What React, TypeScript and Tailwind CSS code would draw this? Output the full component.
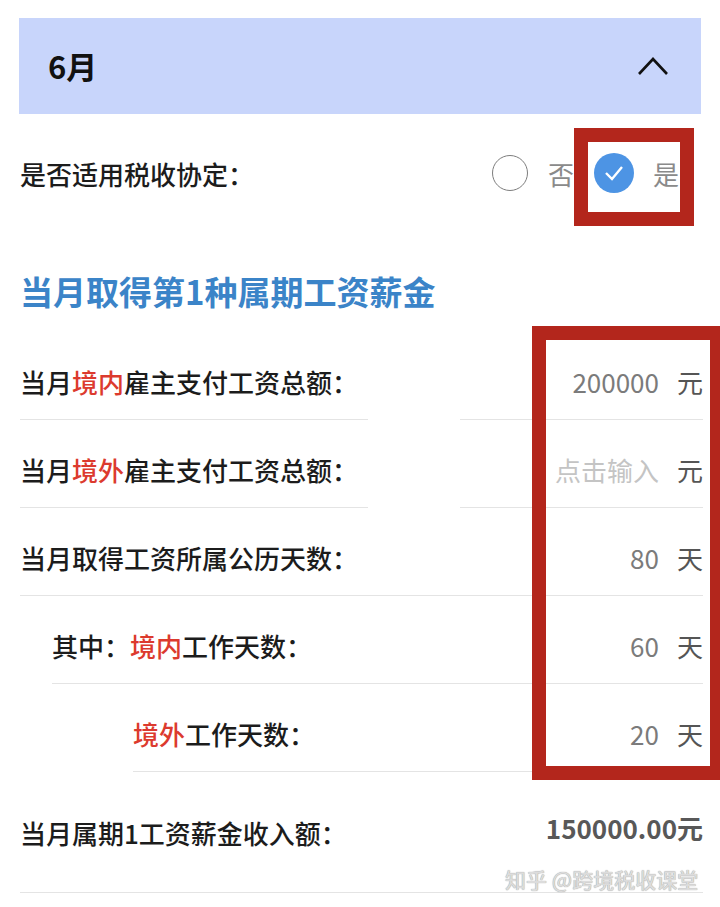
import React from "react";

const font = { fontFamily: '"Noto Sans CJK SC", "Noto Sans", sans-serif' };

type RowProps = {
  label: React.ReactNode;
  value: string;
  unit: string;
  placeholder?: boolean;
  split?: boolean;
  indent?: string;
};

const Red = ({ children }: { children: React.ReactNode }) => (
  <span className="text-[#dc3a2e]">{children}</span>
);

const Row = ({ label, value, unit, placeholder, split, indent = "pl-0" }: RowProps) => {
  const valueCls = placeholder ? "text-[#c4c4c4]" : "text-[#7b7b7b]";
  if (split) {
    return (
      <div className="flex">
        <div className="w-[348px] shrink-0 whitespace-nowrap border-b border-[#e4e4e4] pt-[37px] pb-[24px] text-[26px] leading-[26px] font-medium text-[#1c1c1c]">
          {label}
        </div>
        <div className="ml-[92px] flex flex-1 items-center justify-end border-b border-[#e4e4e4] pt-[37px] pb-[24px] text-[26px] leading-[26px]">
          <span className={valueCls}>{value}</span>
          <span className="ml-[18px] text-[#555]">{unit}</span>
        </div>
      </div>
    );
  }
  return (
    <div className={indent}>
      <div className="flex items-center justify-between border-b border-[#e4e4e4] pt-[37px] pb-[24px] leading-[26px]">
        <div className="whitespace-nowrap text-[26px] font-medium text-[#1c1c1c]">{label}</div>
        <div className="flex items-center text-[26px]">
          <span className={valueCls}>{value}</span>
          <span className="ml-[18px] text-[#555]">{unit}</span>
        </div>
      </div>
    </div>
  );
};

export default function App() {
  return (
    <div className="relative h-[907px] w-[720px] overflow-hidden bg-white" style={font}>
      {/* Header */}
      <div className="mx-[19px] mt-[18px] flex h-[96px] items-center justify-between bg-[#c8d5fb] pl-[29px] pr-[32px]">
        <span className="text-[31px] font-bold text-[#111]">6月</span>
        <svg width="32" height="20" viewBox="0 0 32 20" fill="none">
          <polyline points="2,18 16,3 30,18" stroke="#111" strokeWidth="2.6" />
        </svg>
      </div>

      <div className="pl-[20px] pr-[17px]">
        {/* Treaty question */}
        <div className="flex h-[118px] items-center justify-between">
          <span className="text-[26px] font-medium text-[#1c1c1c]">是否适用税收协定：</span>
          <div className="flex items-center pr-[24px]">
            <span className="h-[36px] w-[36px] rounded-full border-[1.5px] border-[#7d7d7d]" />
            <span className="ml-[20px] text-[26px] text-[#8a8a8a]">否</span>
            <span className="ml-[20px] flex h-[40px] w-[40px] items-center justify-center rounded-full bg-[#4d94e4]">
              <svg width="22" height="18" viewBox="0 0 22 18" fill="none">
                <polyline points="3,9 9,15 19,3" stroke="#fff" strokeWidth="2.4" />
              </svg>
            </span>
            <span className="ml-[19px] text-[26px] text-[#8a8a8a]">是</span>
          </div>
        </div>

        {/* Section title */}
        <div className="pt-[43px] pb-[24px] text-[33px] font-bold leading-[33px] text-[#3b84c8]">
          当月取得第1种属期工资薪金
        </div>

        <Row split label={<>当月<Red>境内</Red>雇主支付工资总额：</>} value="200000" unit="元" />
        <Row split placeholder label={<>当月<Red>境外</Red>雇主支付工资总额：</>} value="点击输入" unit="元" />
        <Row label="当月取得工资所属公历天数：" value="80" unit="天" />
        <Row
          indent="pl-[32px]"
          label={<>其中：<Red>境内</Red>工作天数：</>}
          value="60"
          unit="天"
        />
        <Row indent="pl-[113px]" label={<><Red>境外</Red>工作天数：</>} value="20" unit="天" />

        {/* Total */}
        <div className="relative flex justify-between border-b border-[#e4e4e4] pt-[48px] pb-[46px] leading-[26px]">
          <span className="whitespace-nowrap text-[26px] font-medium text-[#1c1c1c]">当月属期1工资薪金收入额：</span>
          <span className="-mt-[5px] text-[26px] font-bold text-[#585858]">150000.00元</span>
        </div>
      </div>

      {/* Annotation boxes */}
      <div className="absolute left-[574px] top-[128px] h-[98px] w-[120px] border-[14px] border-[#b3261c]" />
      <div className="absolute left-[532px] top-[326px] h-[454px] w-[188px] border-[14px] border-r-[10px] border-[#b3261c]" />

      {/* Watermark */}
      <div className="absolute left-[505px] top-[864px] text-[21px] font-medium text-[#dcdcdc] [text-shadow:0_0_1px_#888]">
        知乎 @跨境税收课堂
      </div>
    </div>
  );
}
